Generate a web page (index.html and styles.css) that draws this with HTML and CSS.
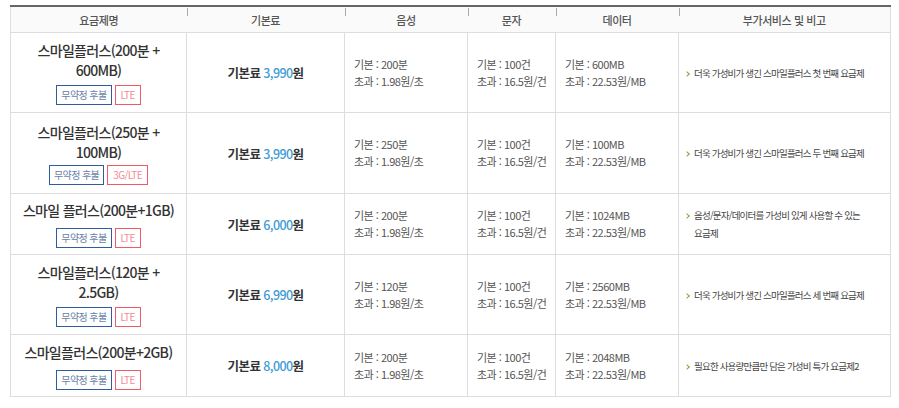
FILE: index.html
```html
<!DOCTYPE html>
<html lang="ko">
<head>
<meta charset="utf-8">
<title>요금제</title>
<link rel="stylesheet" href="styles.css">
</head>
<body>
<table class="plans">
  <colgroup>
    <col class="c1"><col class="c2"><col class="c3"><col class="c4"><col class="c5"><col class="c6">
  </colgroup>
  <thead>
    <tr>
      <th>요금제명</th><th>기본료</th><th>음성</th><th>문자</th><th>데이터</th><th>부가서비스 및 비고</th>
    </tr>
  </thead>
  <tbody>
    <tr class="r1">
      <td class="name"><div class="title">스마일플러스(200분 +<br>600MB)</div><div class="badges"><span class="badge blue">무약정 후불</span><span class="badge red">LTE</span></div></td>
      <td class="price">기본료 <span class="num">3,990</span>원</td>
      <td class="info"><p>기본 : 200분</p><p>초과 : 1.98원/초</p></td>
      <td class="info"><p>기본 : 100건</p><p>초과 : 16.5원/건</p></td>
      <td class="info"><p>기본 : 600MB</p><p>초과 : 22.53원/MB</p></td>
      <td class="note"><div class="nbox"><span class="arr"></span><span class="ntext">더욱 가성비가 생긴 스마일플러스 첫 번째 요금제</span></div></td>
    </tr>
    <tr class="r2">
      <td class="name"><div class="title">스마일플러스(250분 +<br>100MB)</div><div class="badges tight"><span class="badge blue">무약정 후불</span><span class="badge red">3G/LTE</span></div></td>
      <td class="price">기본료 <span class="num">3,990</span>원</td>
      <td class="info"><p>기본 : 250분</p><p>초과 : 1.98원/초</p></td>
      <td class="info"><p>기본 : 100건</p><p>초과 : 16.5원/건</p></td>
      <td class="info"><p>기본 : 100MB</p><p>초과 : 22.53원/MB</p></td>
      <td class="note"><div class="nbox"><span class="arr"></span><span class="ntext">더욱 가성비가 생긴 스마일플러스 두 번째 요금제</span></div></td>
    </tr>
    <tr class="r3">
      <td class="name"><div class="title">스마일 플러스(200분+1GB)</div><div class="badges"><span class="badge blue">무약정 후불</span><span class="badge red">LTE</span></div></td>
      <td class="price">기본료 <span class="num">6,000</span>원</td>
      <td class="info"><p>기본 : 200분</p><p>초과 : 1.98원/초</p></td>
      <td class="info"><p>기본 : 100건</p><p>초과 : 16.5원/건</p></td>
      <td class="info"><p>기본 : 1024MB</p><p>초과 : 22.53원/MB</p></td>
      <td class="note"><div class="nbox"><span class="arr"></span><span class="ntext">음성/문자/데이터를 가성비 있게 사용할 수 있는<br>요금제</span></div></td>
    </tr>
    <tr class="r4">
      <td class="name"><div class="title">스마일플러스(120분 +<br>2.5GB)</div><div class="badges"><span class="badge blue">무약정 후불</span><span class="badge red">LTE</span></div></td>
      <td class="price">기본료 <span class="num">6,990</span>원</td>
      <td class="info"><p>기본 : 120분</p><p>초과 : 1.98원/초</p></td>
      <td class="info"><p>기본 : 100건</p><p>초과 : 16.5원/건</p></td>
      <td class="info"><p>기본 : 2560MB</p><p>초과 : 22.53원/MB</p></td>
      <td class="note"><div class="nbox"><span class="arr"></span><span class="ntext">더욱 가성비가 생긴 스마일플러스 세 번째 요금제</span></div></td>
    </tr>
    <tr class="r5">
      <td class="name"><div class="title">스마일플러스(200분+2GB)</div><div class="badges"><span class="badge blue">무약정 후불</span><span class="badge red">LTE</span></div></td>
      <td class="price">기본료 <span class="num">8,000</span>원</td>
      <td class="info"><p>기본 : 200분</p><p>초과 : 1.98원/초</p></td>
      <td class="info"><p>기본 : 100건</p><p>초과 : 16.5원/건</p></td>
      <td class="info"><p>기본 : 2048MB</p><p>초과 : 22.53원/MB</p></td>
      <td class="note"><div class="nbox"><span class="arr"></span><span class="ntext">필요한 사용량만큼만 담은 가성비 특가 요금제2</span></div></td>
    </tr>
  </tbody>
</table>
</body>
</html>
```

FILE: styles.css
```css
html, body {
  margin: 0;
  padding: 0;
  background: #fff;
}
body {
  padding: 5px 10px;
  font-family: "Noto Sans CJK KR", "Noto Sans", sans-serif;
  color: #444;
}
.plans {
  width: 880px;
  border-collapse: collapse;
  table-layout: fixed;
  border-top: 2px solid #666;
}
.c1 { width: 176px; }
.c2 { width: 158px; }
.c3 { width: 123px; }
.c4 { width: 88px; }
.c5 { width: 123px; }
.c6 { width: 212px; }

.plans th {
  height: 25px;
  padding: 0;
  background-color: #fafafa;
  font-size: 11px;
  font-weight: 500;
  color: #555;
  letter-spacing: -0.4px;
  border-bottom: 1px solid #ddd;
  border-left: 1px solid #ddd;
  border-right: 1px solid #ddd;
  text-align: center;
  vertical-align: middle;
}
.plans th + th {
  border-left: none;
  background-image: linear-gradient(#aaa, #aaa);
  background-size: 1px 8px;
  background-position: 0 1px;
  background-repeat: no-repeat;
}
.plans th:not(:last-child) { border-right: none; }

.plans td {
  border: 1px solid #ddd;
  padding: 0;
  vertical-align: middle;
}
.r1 td { height: 79px; }
.r2 td { height: 80px; }
.r3 td { height: 60px; }
.r4 td { height: 79px; }
.r5 td { height: 61px; }

.name { text-align: center; }
.title {
  font-size: 14px;
  line-height: 20px;
  font-weight: 500;
  color: #333;
  letter-spacing: -0.7px;
}
.badges {
  margin-top: 5px;
  display: flex;
  justify-content: center;
  gap: 3px;
}
.badges.tight { margin-top: 3px; }
.r3 .badges, .r5 .badges { margin-top: 8px; }
.badge {
  display: block;
  height: 18px;
  line-height: 17px;
  font-size: 10px;
  padding: 0 4px;
  letter-spacing: -0.6px;
}
.badge.blue {
  border: 1px solid #2e5d9f;
  color: #6a7fa8;
}
.badge.red {
  border: 1px solid #ee5a66;
  color: #f48a96;
  padding: 0 5px;
}

.price {
  text-align: center;
  font-size: 12.5px;
  font-weight: 700;
  color: #333;
  letter-spacing: -0.6px;
}
.num {
  color: #3e9bd6;
  font-weight: 500;
}

.info {
  padding-left: 9px !important;
  font-size: 11px;
  color: #555;
  letter-spacing: -0.5px;
}
.info p {
  margin: 0;
  line-height: 17px;
}

.note {
  padding-left: 6px !important;
}
.nbox {
  display: flex;
  align-items: flex-start;
  font-size: 9.5px;
  color: #444;
  letter-spacing: -0.8px;
}
.arr {
  flex: none;
  width: 3px;
  height: 3px;
  border-right: 1.5px solid #86a83a;
  border-bottom: 1.5px solid #86a83a;
  transform: rotate(-45deg);
  margin: 8px 5px 0 0;
}
.ntext {
  line-height: 18px;
}
```
